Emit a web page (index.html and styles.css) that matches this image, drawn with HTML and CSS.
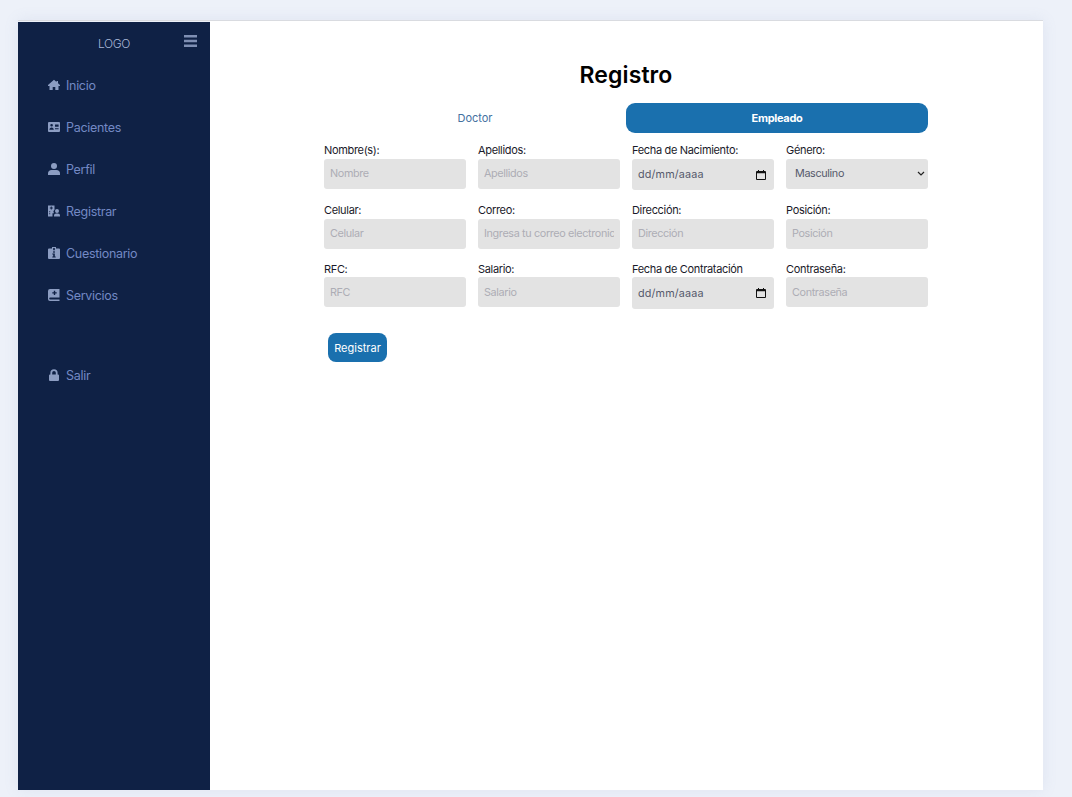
FILE: index.html
```html
<!DOCTYPE html>
<html lang="es">
<head>
  <meta charset="UTF-8" />
  <title>Registro</title>
  <link rel="stylesheet" href="styles.css">
</head>
<body>

  <div class="shell">

    <div class="sidebar">
      <div class="sidebar-top">
        <span class="logo">LOGO</span>
        <svg class="burger" viewBox="0 0 13 12"><path d="M0 0h13v2.400H0zM0 4.800h13v2.400H0zM0 9.600h13V12H0z"/></svg>
      </div>
      <ul>
        <li>
          <svg viewBox="0 0 12 12"><path d="M6 .8 0 6v1h1.500v4h3.200V8h2.600v3h3.200V7H12V6L10 4.300V2H8.500v1z"/></svg>
          Inicio
        </li>
        <li>
          <svg viewBox="0 0 12 12"><path fill-rule="evenodd" d="M1 1h10a1 1 0 0 1 1 1v8a1 1 0 0 1-1 1H1a1 1 0 0 1-1-1V2a1 1 0 0 1 1-1zM3.600 3a1.300 1.300 0 1 0 0 2.600 1.300 1.300 0 0 0 0-2.600zM1.400 8.800h4.400c0-1.300-.9-2.300-2.200-2.300s-2.200 1-2.200 2.300zM7 3.600v2.200h3.600V3.600zm0 3.600v1h3.600v-1z"/></svg>
          Pacientes
        </li>
        <li>
          <svg viewBox="0 0 12 12"><circle cx="6" cy="3" r="3"/><path d="M0 12v-1.500C0 8.500 1.500 7 3.500 7h5c2 0 3.500 1.500 3.500 3.500V12z"/></svg>
          Perfil
        </li>
        <li>
          <svg viewBox="0 0 12 12"><path fill-rule="evenodd" d="M0 .5h6.500v4.300a2.500 2.500 0 0 0-.6 3.400H4.500v3.300H0zM2.800 1.500v1H1.800v1h1v1h1v-1h1v-1h-1v-1zM1.200 6.200v1h1v-1zm0 2v1h1v-1z"/><circle cx="9" cy="6" r="2"/><path d="M6 11.500v-.8C6 9.400 7 8.500 8.200 8.500h1.600c1.200 0 2.200.9 2.200 2.200v.8z"/></svg>
          Registrar
        </li>
        <li>
          <svg viewBox="0 0 12 12"><path fill-rule="evenodd" d="M1 1.500h3V0h4v1.500h3a1 1 0 0 1 1 1V11a1 1 0 0 1-1 1H1a1 1 0 0 1-1-1V2.500a1 1 0 0 1 1-1zM5.200 1v2.200h1.600V1zM5.200 4.300v1.400h1.600V4.300zM4.300 6.500v1h.9v2h-.9v1h3.400v-1h-.9v-3z"/></svg>
          Cuestionario
        </li>
        <li>
          <svg viewBox="0 0 12 12"><path fill-rule="evenodd" d="M2 0h9.500v8.500H2.200a1 1 0 0 0 0 2h9.300V12H2a2 2 0 0 1-2-2V2a2 2 0 0 1 2-2zM5.800 1.700v1.500H4.300v1.400h1.500v1.500h1.400V4.600h1.500V3.200H7.200V1.700z"/></svg>
          Servicios
        </li>
        <li class="logout">
          <svg viewBox="0 0 12 12"><path fill-rule="evenodd" d="M2.400 5.500V3.800a3.600 3.600 0 0 1 7.200 0v1.700h.4a1 1 0 0 1 1 1V11a1 1 0 0 1-1 1H2a1 1 0 0 1-1-1V6.500a1 1 0 0 1 1-1zM4.200 5.500h3.600V3.800a1.800 1.800 0 0 0-3.600 0z"/></svg>
          Salir
        </li>
      </ul>
    </div>

    <div class="main">
      <div class="content">
        <h1>Registro</h1>

        <div class="tabs">
          <button type="button" class="tab">Doctor</button>
          <button type="button" class="tab active">Empleado</button>
        </div>

        <form class="grid">
          <div class="field">
            <label>Nombre(s):</label>
            <input type="text" placeholder="Nombre">
          </div>
          <div class="field">
            <label>Apellidos:</label>
            <input type="text" placeholder="Apellidos">
          </div>
          <div class="field">
            <label>Fecha de Nacimiento:</label>
            <div class="date-box">
              <span>dd/mm/aaaa</span>
              <svg viewBox="0 0 10 10"><path fill-rule="evenodd" d="M2 0h1v1h4V0h1v1h1a1 1 0 0 1 1 1v7a1 1 0 0 1-1 1H1a1 1 0 0 1-1-1V2a1 1 0 0 1 1-1h1zM1 3.200V9h8V3.200z"/></svg>
            </div>
          </div>
          <div class="field">
            <label>Género:</label>
            <select>
              <option>Masculino</option>
              <option>Femenino</option>
            </select>
          </div>

          <div class="field">
            <label>Celular:</label>
            <input type="text" placeholder="Celular">
          </div>
          <div class="field">
            <label>Correo:</label>
            <input type="text" placeholder="Ingresa tu correo electronico">
          </div>
          <div class="field">
            <label>Dirección:</label>
            <input type="text" placeholder="Dirección">
          </div>
          <div class="field">
            <label>Posición:</label>
            <input type="text" placeholder="Posición">
          </div>

          <div class="field">
            <label>RFC:</label>
            <input type="text" placeholder="RFC">
          </div>
          <div class="field">
            <label>Salario:</label>
            <input type="text" placeholder="Salario">
          </div>
          <div class="field">
            <label>Fecha de Contratación</label>
            <div class="date-box">
              <span>dd/mm/aaaa</span>
              <svg viewBox="0 0 10 10"><path fill-rule="evenodd" d="M2 0h1v1h4V0h1v1h1a1 1 0 0 1 1 1v7a1 1 0 0 1-1 1H1a1 1 0 0 1-1-1V2a1 1 0 0 1 1-1h1zM1 3.200V9h8V3.200z"/></svg>
            </div>
          </div>
          <div class="field">
            <label>Contraseña:</label>
            <input type="password" placeholder="Contraseña">
          </div>
        </form>

        <button type="button" class="submit">Registrar</button>
      </div>
    </div>

  </div>

</body>
</html>
```

FILE: styles.css
```css
html, body { height: 100%; }

body {
  margin: 0;
  font-family: Inter, 'Noto Sans', sans-serif;
  background: #edf1f9;
  overflow: hidden;
}

.shell {
  display: flex;
  width: 1025px;
  height: 769px;
  margin: 20px 0 0 18px;
  border-top: 1px solid #d9dbe0;
  box-shadow: 0 0 14px rgba(120,140,180,0.12);
}

.sidebar {
  width: 192px;
  flex-shrink: 0;
  margin-top: 1px;
  background: #0f2145;
}

.sidebar-top {
  display: flex;
  align-items: center;
  justify-content: center;
  position: relative;
  height: 42px;
}

.logo {
  font-size: 12px;
  font-weight: 300;
  color: #a9b7d6;
  letter-spacing: -0.4px;
}

.burger {
  position: absolute;
  top: 13px;
  left: 166px;
  width: 13px;
  height: 12px;
  fill: #7f8fb3;
}

.sidebar ul {
  list-style: none;
  margin: 0;
  padding: 0 0 0 30px;
}

.sidebar li {
  display: flex;
  align-items: center;
  gap: 6px;
  height: 42px;
  font-size: 12.500px;
  letter-spacing: -0.3px;
  color: #7389c4;
}

.sidebar li svg {
  width: 12px;
  height: 12px;
  fill: #8c9dc2;
  flex-shrink: 0;
}

.sidebar li.logout { margin-top: 38px; }

.main {
  flex: 1;
  background: #fff;
}

.content {
  width: 604px;
  margin-left: 114px;
  padding-top: 40px;
}

h1 {
  margin: 0;
  font-size: 23px;
  line-height: 28px;
  font-weight: 600;
  letter-spacing: 0.1px;
  color: #000;
  text-align: center;
}

.tabs {
  display: grid;
  grid-template-columns: 1fr 1fr;
  margin-top: 14px;
}

.tab {
  height: 30px;
  border: none;
  border-radius: 9px;
  background: none;
  font-family: inherit;
  font-size: 11px;
  font-weight: 400;
  color: #44719f;
}

.tab.active {
  background: #1a70ae;
  color: #fff;
  font-weight: 700;
  letter-spacing: -0.3px;
}

.grid {
  display: grid;
  grid-template-columns: repeat(4, 142px);
  column-gap: 12px;
  row-gap: 12px;
  align-items: start;
  margin-top: 9px;
}

.field label {
  display: block;
  height: 16.500px;
  line-height: 16.500px;
  font-size: 11px;
  letter-spacing: -0.33px;
  color: #1a1a2a;
}

.field input, .field select, .date-box {
  display: block;
  width: 100%;
  height: 30px;
  box-sizing: border-box;
  padding: 0.600px 6px 0;
  border: none;
  border-radius: 3px;
  background: #e3e3e3;
  font-family: inherit;
  font-size: 10.800px;
  letter-spacing: -0.35px;
  color: #55596b;
}

.date-box {
  display: flex;
  align-items: center;
  justify-content: space-between;
  height: 31.500px;
  padding-right: 8px;
  letter-spacing: 0.15px;
}

.date-box svg {
  width: 10px;
  height: 10px;
  fill: #111;
}

.field select {
  appearance: none;
  padding-left: 9px;
  background: #e3e3e3 url("data:image/svg+xml,%3Csvg xmlns='http://www.w3.org/2000/svg' viewBox='0 0 8 5'%3E%3Cpath d='M1 1l3 3 3-3' fill='none' stroke='%23222' stroke-width='1.200'/%3E%3C/svg%3E") no-repeat right 3px center / 8px 5px;
}

.field input::placeholder { color: #adadb5; }

.submit {
  display: block;
  width: 59px;
  height: 29px;
  margin: 24.500px 0 0 4px;
  padding: 0;
  border: none;
  border-radius: 8px;
  background: #1a70ae;
  font-family: inherit;
  font-size: 11px;
  font-weight: 400;
  color: #fff;
}
```
